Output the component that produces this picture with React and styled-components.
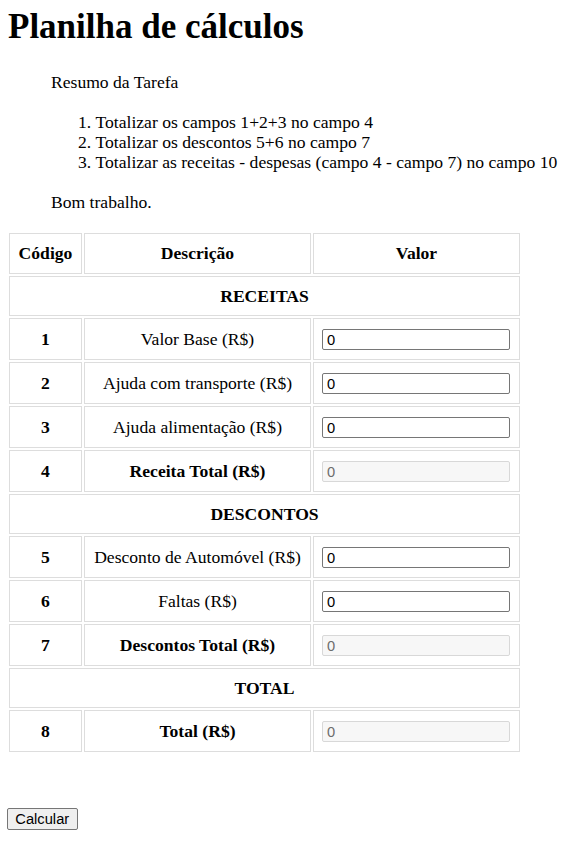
import React, { useState } from 'react'
import styled, { createGlobalStyle } from 'styled-components'

const GlobalStyle = createGlobalStyle`
  html, body {
    margin: 0;
    padding: 0;
    background: #fff;
  }
  body {
    font-family: "Liberation Serif", "Times New Roman", serif;
    font-size: 17.6px;
    line-height: 20.2px;
    color: #000;
  }
`

const Page = styled.div`
  padding: 7px 7px 20px 7px;
`

const Title = styled.h1`
  margin: 0;
  padding-left: 1px;
  font-size: 35px;
  line-height: 40px;
  font-weight: bold;
`

const Summary = styled.blockquote`
  margin: 25px 0 0 44px;
  p {
    margin: 0;
  }
`

const Steps = styled.ol`
  margin: 19.5px 0;
  padding-left: 44.5px;
`

const Sheet = styled.table`
  margin-top: 19px;
  width: 515px;
  table-layout: fixed;
  border-collapse: separate;
  border-spacing: 2px;
`

const Cell = styled.td`
  box-sizing: border-box;
  height: ${p => p.$h}px;
  padding: 0 8px;
  border: 1px solid #dddddd;
  white-space: nowrap;
  text-align: ${p => p.$left ? 'left' : 'center'};
  vertical-align: middle;
  font-weight: ${p => p.$bold ? 'bold' : 'normal'};
`

const Field = styled.input`
  display: block;
  box-sizing: border-box;
  width: 188px;
  height: 21px;
  margin: 0;
  padding: 1px 4px 0;
  font-family: "Liberation Sans", Arial, sans-serif;
  font-size: 14.7px;
  color: #000;
  background: #fff;
  border: 1px solid #767676;
  border-radius: 2px;
  &:disabled {
    color: #6d6d6d;
    background: #f7f7f7;
    border-color: #d8d8d8;
  }
`

const CalcButton = styled.button`
  margin-top: 54px;
  box-sizing: border-box;
  width: 70.5px;
  height: 22px;
  padding: 0;
  font-family: "Liberation Sans", Arial, sans-serif;
  font-size: 14.7px;
  color: #000;
  background: #efefef;
  border: 1px solid #767676;
  border-radius: 2px;
`

const rows = [
  { section: 'RECEITAS' },
  { code: 1, label: 'Valor Base (R$)' },
  { code: 2, label: 'Ajuda com transporte (R$)' },
  { code: 3, label: 'Ajuda alimentação (R$)' },
  { code: 4, label: 'Receita Total (R$)', total: true },
  { section: 'DESCONTOS' },
  { code: 5, label: 'Desconto de Automóvel (R$)' },
  { code: 6, label: 'Faltas (R$)' },
  { code: 7, label: 'Descontos Total (R$)', total: true },
  { section: 'TOTAL' },
  { code: 8, label: 'Total (R$)', total: true },
]

export default function App() {
  const [values, setValues] = useState({ 1: 0, 2: 0, 3: 0, 5: 0, 6: 0 })
  const [totals, setTotals] = useState({ 4: 0, 7: 0, 8: 0 })

  const calcular = () => {
    const n = k => Number(values[k]) || 0
    const receita = n(1) + n(2) + n(3)
    const desconto = n(5) + n(6)
    setTotals({ 4: receita, 7: desconto, 8: receita - desconto })
  }

  return (
    <Page>
      <GlobalStyle />
      <Title>Planilha de cálculos</Title>
      <Summary>
        <p>Resumo da Tarefa</p>
        <Steps>
          <li>Totalizar os campos 1+2+3 no campo 4</li>
          <li>Totalizar os descontos 5+6 no campo 7</li>
          <li>Totalizar as receitas - despesas (campo 4 - campo 7) no campo 10</li>
        </Steps>
        <p>Bom trabalho.</p>
      </Summary>

      <Sheet>
        <colgroup>
          <col style={{ width: 73 }} />
          <col style={{ width: 227 }} />
          <col style={{ width: 207 }} />
        </colgroup>
        <tbody>
          <tr>
            <Cell as="th" $h={41} $bold>Código</Cell>
            <Cell as="th" $h={41} $bold>Descrição</Cell>
            <Cell as="th" $h={41} $bold>Valor</Cell>
          </tr>
          {rows.map((r, i) =>
            r.section ? (
              <tr key={i}>
                <Cell $h={40} colSpan={3} $bold>{r.section}</Cell>
              </tr>
            ) : (
              <tr key={i}>
                <Cell $h={42} $bold>{r.code}</Cell>
                <Cell $h={42} $bold={r.total}>{r.label}</Cell>
                <Cell $h={42} $left>
                  {r.total ? (
                    <Field type="text" value={totals[r.code]} disabled readOnly />
                  ) : (
                    <Field
                      type="text"
                      value={values[r.code]}
                      onChange={e => setValues({ ...values, [r.code]: e.target.value })}
                    />
                  )}
                </Cell>
              </tr>
            )
          )}
        </tbody>
      </Sheet>

      <CalcButton onClick={calcular}>Calcular</CalcButton>
    </Page>
  )
}
